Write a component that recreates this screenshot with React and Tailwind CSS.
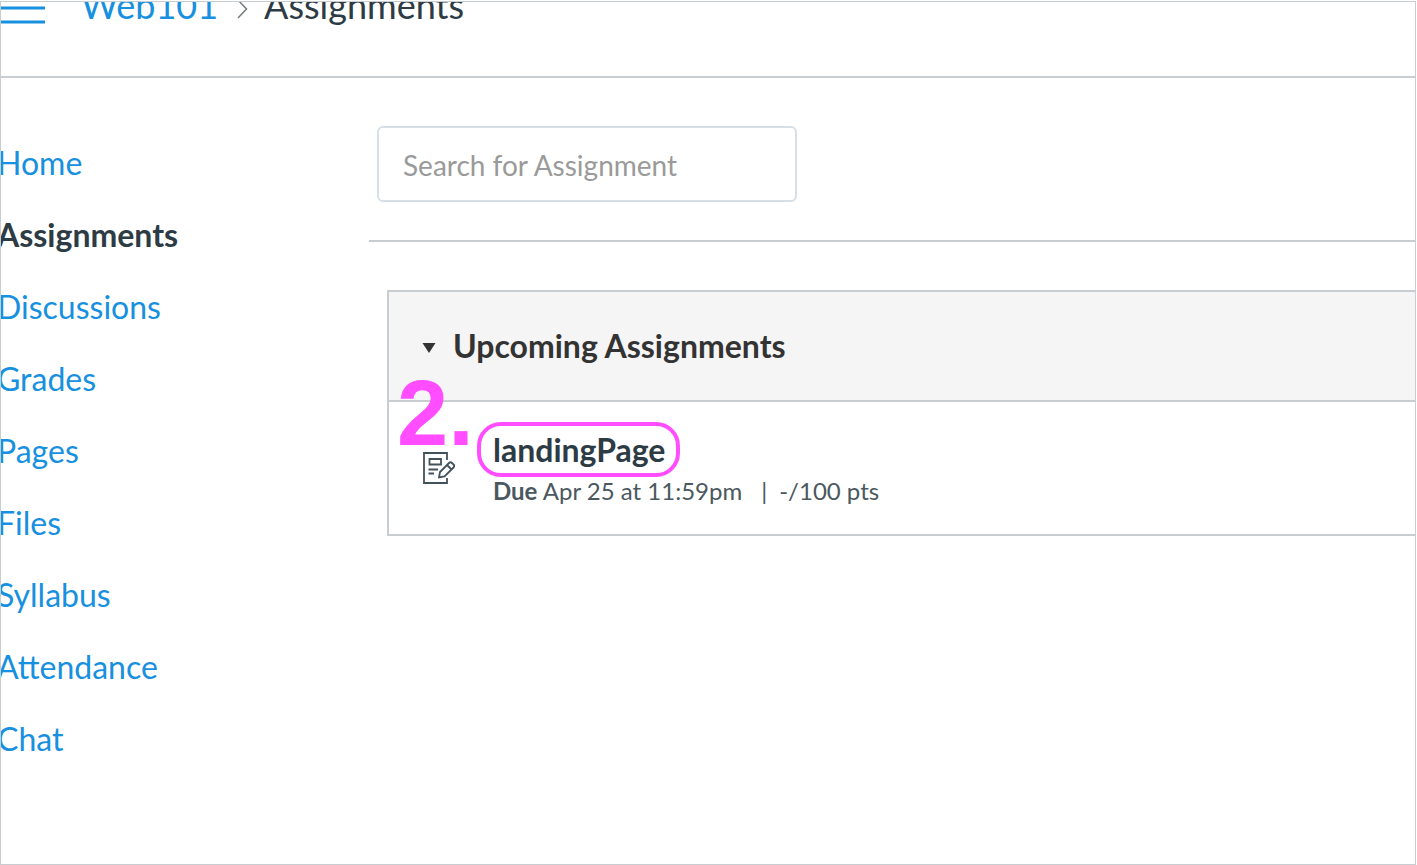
import React from "react";

const navItems = [
  "Home",
  "Assignments",
  "Discussions",
  "Grades",
  "Pages",
  "Files",
  "Syllabus",
  "Attendance",
  "Chat",
];

function Header() {
  return (
    <header className="flex h-19 items-start overflow-hidden border-b-2 border-[#c7cdd1]">
      <button type="button" aria-label="Toggle course navigation" className="-ml-1 h-6 w-12 shrink-0">
        <svg viewBox="0 0 48 24" className="block h-6 w-12" aria-hidden="true">
          <path d="M0 6H48M0 20H48" fill="none" stroke="#1790df" strokeWidth="3" />
        </svg>
      </button>
      <nav aria-label="Breadcrumb" className="-mt-5 ml-9 flex items-center text-[36px] leading-[46px]">
        <a href="#course" className="text-[#1790df] tabular-nums">Web101</a>
        <svg viewBox="0 0 12 20" className="mx-4 mt-2 ml-4.5 h-5 w-3" aria-hidden="true">
          <path d="M2 1L10.500 10L2 19" fill="none" stroke="#73797d" strokeWidth="1.500" />
        </svg>
        <span aria-current="page">Assignments</span>
      </nav>
    </header>
  );
}

function CourseNav() {
  return (
    <nav aria-label="Course" className="-ml-1 w-93 shrink-0 pt-[49px]">
      <ul>
        {navItems.map((item) => (
          <li key={item} className="flex h-18 items-center">
            <a
              href={"#" + item.toLowerCase()}
              className={
                item === "Assignments"
                  ? "text-[32px] leading-10 font-bold text-[#2d3b45]"
                  : "text-[32px] leading-10 text-[#1790df]"
              }
            >
              {item}
            </a>
          </li>
        ))}
      </ul>
    </nav>
  );
}

function AssignmentIcon() {
  return (
    <svg viewBox="0 0 32 32" className="h-8 w-8" fill="none" stroke="#43515a" strokeWidth="1.800" aria-hidden="true">
      <path d="M24 8V1H1V31H24V26" />
      <path d="M6.500 7H18V12.500H6.500ZM5.500 17.500H15M5.500 21.500H11" />
      <path d="M16 25.500L17 20L26 11Q27.500 9.500 29 11L30.500 12.500Q32 14 30.500 15.500L21.500 24.500ZM24 13L28.500 17.500" />
    </svg>
  );
}

function Upcoming() {
  return (
    <section className="mt-12 ml-4.5 border-y-2 border-l-2 border-[#c7cdd1]">
      <h2 className="border-b-2 border-[#c7cdd1] bg-[#f5f5f5]">
        <button type="button" aria-expanded="true" className="flex h-27 w-full items-center gap-4 pl-8 text-left text-[32px] leading-10 font-bold text-[#333333]">
          <svg viewBox="0 0 16 12" className="mt-1 h-3 w-4" aria-hidden="true">
            <path d="M1.500 1H14.500L8 11Z" fill="#333333" />
          </svg>
          Upcoming Assignments
        </button>
      </h2>
      <div className="relative flex h-33 items-start pl-8">
        <span className="mt-12.5 ml-0.5">
          <AssignmentIcon />
        </span>
        <div className="mt-5 ml-5.5">
          <a href="#landing-page" className="block w-fit rounded-[24px] border-4 border-[#ff4dff] py-1 pr-[11px] pl-3 text-[32px] leading-[39px] font-bold">
            landingPage
          </a>
          <p className="ml-4 flex text-[24px] leading-7 whitespace-pre text-[#4a5860]">
            <span><b>Due</b> Apr 25 at 11:59pm</span>
            <span className="mr-3 ml-[19px]">|</span>
            <span>-/100 pts</span>
          </p>
        </div>
        <span className="absolute -top-[35px] left-2 font-['Liberation_Sans',sans-serif] text-[92px] leading-23 font-bold text-[#ff4dff]">2.</span>
      </div>
    </section>
  );
}

export default function App() {
  return (
    <div className="flex min-h-screen flex-col bg-white pt-px pr-px font-['Lato',sans-serif] text-[#2d3b45]">
      <div className="grow overflow-hidden border border-[#c7cdd1]">
        <Header />
        <div className="flex">
          <CourseNav />
          <main className="min-w-0 grow pt-12">
            <div className="border-b-2 border-[#c7cdd1] pb-9.5 pl-2">
              <input
                type="search"
                aria-label="Search for Assignment"
                placeholder="Search for Assignment"
                className="block h-19 w-full max-w-105 rounded-md border-2 border-[#d7dfe6] px-6 pt-0.5 text-[28px] leading-9 placeholder:text-[#9a9a9a]"
              />
            </div>
            <Upcoming />
          </main>
        </div>
      </div>
    </div>
  );
}
